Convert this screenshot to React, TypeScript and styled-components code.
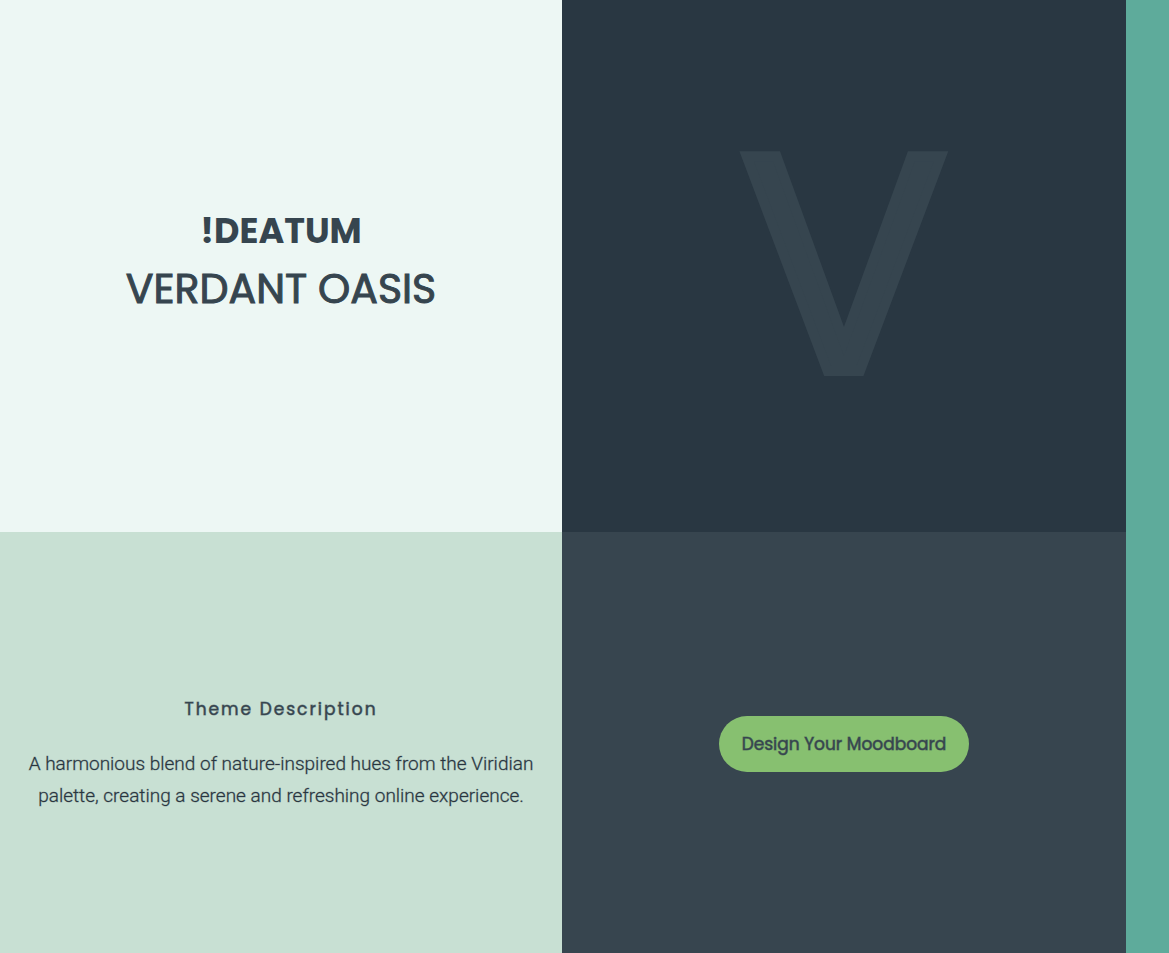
import React from 'react';
import styled, { createGlobalStyle } from 'styled-components';

const GlobalStyle = createGlobalStyle`
  *, *::before, *::after { box-sizing: border-box; }
  body { margin: 0; background: #5eab9b; }
`;

const Board = styled.main`
  display: grid;
  grid-template-columns: 562fr 564fr 43px;
  grid-template-rows: minmax(532px, auto) 1fr;
  min-height: 100vh;
`;

const Panel = styled.section<{ $bg: string; $pad?: string }>`
  display: flex;
  flex-direction: column;
  align-items: center;
  justify-content: center;
  padding: ${(p) => p.$pad ?? '0'};
  background: ${(p) => p.$bg};
  color: #36454f;
  font-family: Poppins, Lato, sans-serif;
  text-align: center;
`;

const Accent = styled.aside`
  grid-column: 3;
  grid-row: 1 / span 2;
  background: #5eab9b;
`;

const Brand = styled.p`
  margin: 0;
  font-size: 35px;
  font-weight: 700;
  line-height: 56px;
`;

const Title = styled.h1`
  margin: 0;
  font-size: 41px;
  font-weight: 400;
  line-height: 60px;
  -webkit-text-stroke: 1px currentColor;
`;

const Monogram = styled.span`
  color: #36454f;
  font-size: 308px;
  font-weight: 400;
  line-height: 1;
  -webkit-text-stroke: 10px currentColor;
`;

const Heading = styled.h2`
  margin: 0 0 25px;
  font-size: 17px;
  font-weight: 400;
  line-height: 28px;
  letter-spacing: 2px;
  -webkit-text-stroke: 1px rgba(54, 69, 79, 0.55);
`;

const Description = styled.p`
  margin: 0;
  color: #28353f;
  font-family: Roboto, sans-serif;
  font-size: 19px;
  font-weight: 300;
  line-height: 32px;
  -webkit-text-stroke: 1px rgba(40, 53, 63, 0.3);
`;

const Action = styled.button`
  height: 56px;
  padding: 0 23px;
  border: 0;
  border-radius: 28px;
  background: #87c070;
  color: #36454f;
  font-family: Poppins, Lato, sans-serif;
  font-size: 17px;
  font-weight: 400;
  -webkit-text-stroke: 1px rgba(54, 69, 79, 0.55);
  cursor: pointer;
`;

export default function App() {
  return (
    <>
      <GlobalStyle />
      <Board>
        <Panel $bg="#edf7f4" $pad="0 0 10px">
          <Brand>!DEATUM</Brand>
          <Title>VERDANT OASIS</Title>
        </Panel>
        <Panel $bg="#293742" $pad="0 0 4px">
          <Monogram>V</Monogram>
        </Panel>
        <Panel $bg="#c8e0d3" $pad="21px 24px 0">
          <Heading>Theme Description</Heading>
          <Description>
            A harmonious blend of nature-inspired hues from the Viridian palette, creating a serene and refreshing online experience.
          </Description>
        </Panel>
        <Panel $bg="#37454f" $pad="2px 0 0">
          <Action type="button">Design Your Moodboard</Action>
        </Panel>
        <Accent />
      </Board>
    </>
  );
}
